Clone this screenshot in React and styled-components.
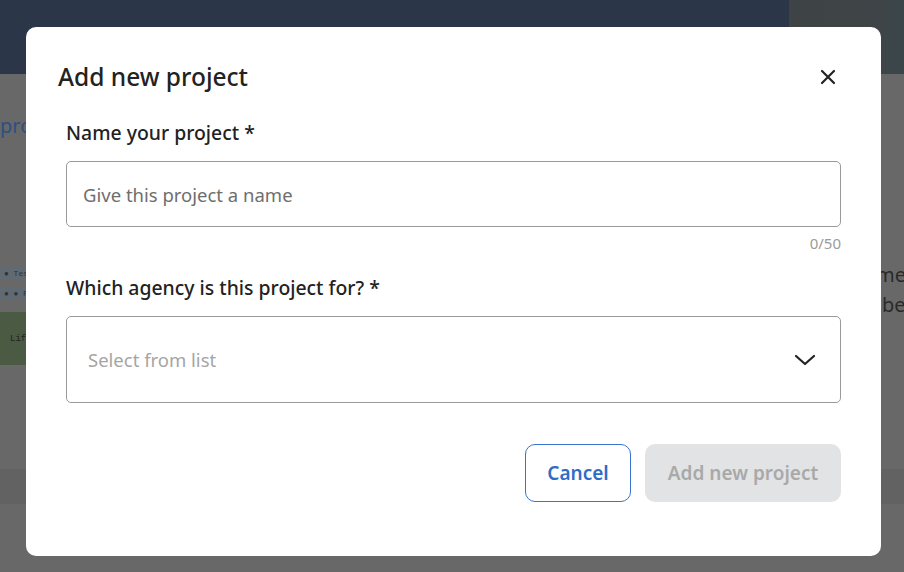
import React from "react";
import styled, { createGlobalStyle } from "styled-components";

const GlobalStyle = createGlobalStyle`
  html, body {
    margin: 0;
    padding: 0;
    width: 904px;
    height: 572px;
    overflow: hidden;
    font-family: "Noto Sans", "Open Sans", Arial, sans-serif;
  }
`;

// dimmed page that sits behind the dialog
const Page = styled.div`
  position: relative;
  width: 904px;
  height: 572px;
  background: #686868;
  display: flex;
  flex-direction: column;
  overflow: hidden;
`;

const TopBar = styled.div`
  height: 74px;
  display: flex;
  background: #2b3749;
`;

const TopBarFill = styled.div`
  flex: 1;
`;

const Hero = styled.div`
  width: 115px;
  background: linear-gradient(90deg, #3e4446 0%, #3f4446 70%, #3a464b 100%);
`;

const PageBody = styled.div`
  flex: 1;
  display: grid;
  grid-template-columns: 26px 1fr 24px;
`;

const LeftStrip = styled.div`
  display: flex;
  flex-direction: column;
  padding-top: 38px;
  font-size: 20px;
  color: #2e4f80;
  min-width: 0;
`;

const Peek = styled.span`
  white-space: nowrap;
`;

const TagRow = styled.div`
  margin-top: ${(p) => p.$top}px;
  width: 80px;
  height: 12px;
  background: #5f6a73;
  font-family: "Liberation Mono", monospace;
  font-size: 8px;
  line-height: 12px;
  color: #333;
  padding-left: 4px;
  white-space: nowrap;
`;

const GreenBox = styled.div`
  margin-top: 12px;
  width: 90px;
  height: 53px;
  background: #4b5a43;
  font-family: "Liberation Mono", monospace;
  font-size: 9px;
  color: #222;
  display: flex;
  align-items: center;
  padding-left: 10px;
  white-space: nowrap;
`;

const Band = styled.div`
  margin-top: 104px;
  height: 35px;
  background: #626262;
`;

const RightStrip = styled.div`
  grid-column: 3;
  display: flex;
  flex-direction: column;
  padding-top: 186px;
  font-size: 20px;
  line-height: 30px;
  color: #2a2a2a;
  min-width: 0;
`;

const RightPeek = styled.span`
  white-space: nowrap;
  margin-left: ${(p) => p.$shift}px;
`;

const RightBand = styled.div`
  margin-top: 149px;
  height: 35px;
  background: #626262;
  margin-left: -24px;
`;

// dialog
const Dialog = styled.div`
  position: absolute;
  left: 26px;
  top: 27px;
  width: 855px;
  height: 529px;
  box-sizing: border-box;
  background: #fff;
  border-radius: 10px;
  padding: 34px 40px 0 32px;
  display: flex;
  flex-direction: column;
`;

const Header = styled.div`
  display: flex;
  align-items: center;
  justify-content: space-between;
  height: 32px;
`;

const Title = styled.h2`
  margin: 0;
  font-size: 24.5px;
  line-height: 32px;
  font-weight: 500;
  color: #222;
`;

const CloseButton = styled.button`
  width: 20px;
  height: 20px;
  border: none;
  background: transparent;
  padding: 0;
  margin-right: 3px;
  display: flex;
  align-items: center;
  justify-content: center;
  cursor: pointer;
`;

const Form = styled.div`
  display: flex;
  flex-direction: column;
  padding-left: 8px;
`;

const Label = styled.label`
  margin-top: ${(p) => p.$top}px;
  font-size: 19.4px;
  line-height: 26px;
  font-weight: 500;
  color: #222;
`;

const Field = styled.div`
  margin-top: 15px;
  height: ${(p) => p.$height}px;
  box-sizing: border-box;
  border: 1px solid #9a9a9a;
  border-radius: 5px;
  display: flex;
  align-items: center;
  justify-content: space-between;
  padding: 0 24px 0 ${(p) => p.$indent}px;
`;

const Placeholder = styled.span`
  font-size: 18.5px;
  color: ${(p) => p.$color};
`;

const Counter = styled.div`
  margin-top: 6px;
  text-align: right;
  font-size: 15px;
  line-height: 20px;
  color: #9b9b9b;
`;

const Actions = styled.div`
  margin-top: 41px;
  display: flex;
  justify-content: flex-end;
  gap: 14px;
`;

const Button = styled.button`
  width: ${(p) => (p.$primary ? 196 : 106)}px;
  height: 58px;
  box-sizing: border-box;
  border-radius: 10px;
  font-family: inherit;
  font-size: 19px;
  font-weight: 600;
  padding: 0;
  border: ${(p) => (p.$primary ? "none" : "1.5px solid #3a73d0")};
  background: ${(p) => (p.$primary ? "#e1e3e5" : "#fff")};
  color: ${(p) => (p.$primary ? "#a9a9a9" : "#2f6cc8")};
`;

const CloseIcon = () => (
  <svg width="16" height="16" viewBox="0 0 16 16" fill="none">
    <path d="M2 2L14 14M14 2L2 14" stroke="#222" strokeWidth="2.2" strokeLinecap="round" />
  </svg>
);

const Chevron = () => (
  <svg width="22" height="14" viewBox="0 0 22 14" fill="none">
    <path d="M2 3L11 11L20 3" stroke="#222" strokeWidth="2.2" strokeLinecap="round" strokeLinejoin="round" />
  </svg>
);

export default function App() {
  return (
    <>
      <GlobalStyle />
      <Page>
        <TopBar>
          <TopBarFill />
          <Hero />
        </TopBar>
        <PageBody>
          <LeftStrip>
            <Peek>projects</Peek>
            <TagRow $top={129}>● Test</TagRow>
            <TagRow $top={8}>● ● Pro</TagRow>
            <GreenBox>Lif</GreenBox>
            <Band />
          </LeftStrip>
          <RightStrip>
            <RightPeek $shift={-4}>me</RightPeek>
            <RightPeek $shift={2}>be</RightPeek>
            <RightBand />
          </RightStrip>
        </PageBody>

        <Dialog role="dialog">
          <Header>
            <Title>Add new project</Title>
            <CloseButton aria-label="Close">
              <CloseIcon />
            </CloseButton>
          </Header>
          <Form>
            <Label $top={27}>Name your project *</Label>
            <Field $height={66} $indent={16}>
              <Placeholder $color="#6e6e6e">Give this project a name</Placeholder>
            </Field>
            <Counter>0/50</Counter>
            <Label $top={22}>Which agency is this project for? *</Label>
            <Field $height={87} $indent={21}>
              <Placeholder $color="#a5a5a5">Select from list</Placeholder>
              <Chevron />
            </Field>
            <Actions>
              <Button>Cancel</Button>
              <Button $primary>Add new project</Button>
            </Actions>
          </Form>
        </Dialog>
      </Page>
    </>
  );
}
